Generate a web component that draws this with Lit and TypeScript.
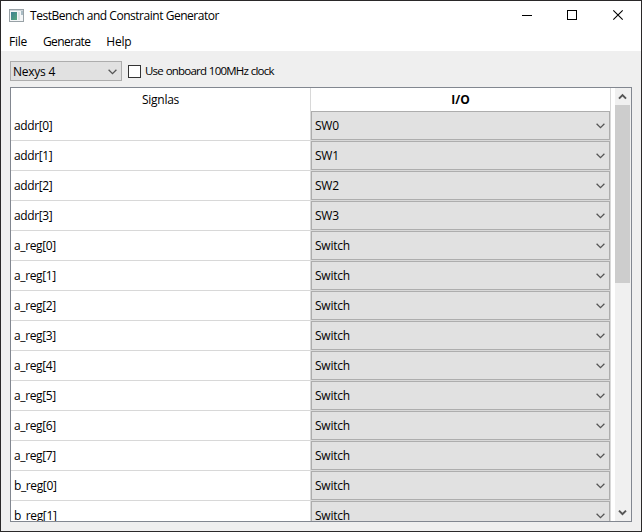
import { LitElement, html, css } from "lit";
import { customElement, property } from "lit/decorators.js";

const chevron = html`<svg class="chev" width="9" height="6" viewBox="0 0 9 6">
  <path d="M0.6 0.8 L4.5 4.6 L8.4 0.8" fill="none" stroke="#555" stroke-width="1.3" />
</svg>`;

@customElement("combo-box")
export class ComboBox extends LitElement {
  @property() value = "";
  static styles = css`
    :host {
      display: flex;
      align-items: center;
      box-sizing: border-box;
      border: 1px solid #adadad;
      background: #e1e1e1;
      padding: 0 4px 0 3px;
    }
    .value {
      flex: 1;
      white-space: pre;
    }
    .chev {
      display: block;
      margin-top: 1px;
    }
  `;
  render() {
    return html`<span class="value">${this.value}</span>${chevron}`;
  }
}

@customElement("app-root")
export class AppRoot extends LitElement {
  rows: [string, string][] = [
    ...[0, 1, 2, 3].map((i) => [`addr[${i}]`, `SW${i}`] as [string, string]),
    ...[0, 1, 2, 3, 4, 5, 6, 7].map((i) => [`a_reg[${i}]`, "Switch"] as [string, string]),
    ["b_reg[0]", "Switch"],
    ["b_reg[1]", "Switch"],
  ];

  static styles = css`
    :host {
      display: flex;
      flex-direction: column;
      box-sizing: border-box;
      width: 642px;
      height: 532px;
      border: 1px solid #2a2829;
      background: #efefef;
      color: #000;
      font: 12px/16px "Open Sans", "Noto Sans", sans-serif;
      letter-spacing: -0.25px;
      overflow: hidden;
    }
    .title {
      display: flex;
      align-items: center;
      height: 29px;
      background: #fff;
      padding-left: 8px;
      flex: none;
    }
    .title svg {
      display: block;
      flex: none;
    }
    .name {
      flex: 1;
      margin-left: 6px;
      padding-top: 1px;
      letter-spacing: -0.47px;
      white-space: nowrap;
    }
    .menu {
      display: flex;
      align-items: center;
      gap: 16px;
      height: 19px;
      background: #fff;
      padding: 2px 8px 0 8px;
      flex: none;
    }
    .generate {
      letter-spacing: -0.6px;
    }
    .tools {
      display: flex;
      align-items: center;
      height: 20px;
      margin: 10px 9px 6px 9px;
      flex: none;
    }
    .board {
      width: 112px;
      height: 20px;
      padding: 1px 4px 0 2px;
    }
    .box {
      box-sizing: border-box;
      width: 13px;
      height: 13px;
      border: 1px solid #333;
      background: #fff;
      margin: 0 4px 0 6px;
    }
    .check {
      font-size: 11.5px;
      letter-spacing: -0.79px;
      word-spacing: 0.5px;
      white-space: nowrap;
    }
    .frame {
      box-sizing: border-box;
      display: flex;
      width: 622px;
      height: 435px;
      margin-left: 9px;
      border: 1px solid #828790;
      background: #fff;
      overflow: hidden;
      flex: none;
    }
    .grid {
      width: 600px;
      margin-right: 4px;
      flex: none;
    }
    .head,
    .row {
      display: grid;
      grid-template-columns: 299px 299px;
      column-gap: 1px;
      background: #d8d8d8;
      padding-right: 1px;
      width: 599px;
    }
    .head {
      height: 23px;
      line-height: 24px;
      text-align: center;
    }
    .head span {
      background: #fff;
    }
    .head b {
      letter-spacing: 0;
    }
    .row {
      height: 29px;
      padding-bottom: 1px;
    }
    .cell {
      background: #fff;
      padding-left: 3px;
      line-height: 30px;
      height: 29px;
      letter-spacing: -0.38px;
    }
    .bar {
      display: flex;
      flex-direction: column;
      align-items: center;
      justify-content: space-between;
      width: 16px;
      background: #f0f0f0;
    }
    .up,
    .down {
      display: block;
      flex: none;
    }
    .thumb {
      width: 15px;
      height: 178px;
      background: #cdcdcd;
      align-self: flex-start;
    }
    .track {
      flex: 1;
      align-self: stretch;
    }
  `;

  render() {
    return html`
      <div class="title">
        <svg width="15" height="13" viewBox="0 0 15 13">
          <defs>
            <linearGradient id="g" x1="0" y1="0" x2="1" y2="1">
              <stop offset="0" stop-color="#3d7f92" />
              <stop offset="1" stop-color="#55a67c" />
            </linearGradient>
          </defs>
          <rect x="0.5" y="0.5" width="14" height="12" fill="#f4f6f7" stroke="#98a1a6" />
          <rect x="1" y="1" width="13" height="1" fill="#cdd5da" />
          <rect x="2" y="3" width="6" height="8" fill="url(#g)" />
          <rect x="9" y="3" width="2" height="8" fill="#dde4e6" />
          <rect x="12" y="2" width="2" height="4" fill="#a9bcc4" />
        </svg>
        <span class="name">TestBench and Constraint Generator</span>
        <svg width="138" height="29" viewBox="0 0 138 29" fill="none" stroke="#000">
          <path d="M19 14.5H29" />
          <rect x="64.5" y="9.5" width="9" height="9" />
          <path d="M110.3 9.3L119.7 18.7M119.7 9.3L110.3 18.7" stroke-width="1.1" />
        </svg>
      </div>
      <div class="menu">
        <span>File</span><span class="generate">Generate</span><span>Help</span>
      </div>
      <div class="tools">
        <combo-box class="board" .value=${"Nexys 4"}></combo-box>
        <span class="box"></span><span class="check">Use onboard 100MHz clock</span>
      </div>
      <div class="frame">
        <div class="grid">
          <div class="head"><span>Signlas</span><span><b>I/O</b></span></div>
          ${this.rows.map(
            ([name, io]) => html`<div class="row">
              <div class="cell">${name}</div>
              <combo-box .value=${io}></combo-box>
            </div>`
          )}
        </div>
        <div class="bar">
          <svg class="up" width="16" height="17" viewBox="0 0 16 17">
            <path d="M4 10.6L7.5 7.1L11 10.6" fill="none" stroke="#555" stroke-width="2" />
          </svg>
          <div class="thumb"></div>
          <div class="track"></div>
          <svg class="down" width="16" height="17" viewBox="0 0 16 17">
            <path d="M4 6.6L7.5 10.1L11 6.6" fill="none" stroke="#555" stroke-width="2" />
          </svg>
        </div>
      </div>
    `;
  }
}
